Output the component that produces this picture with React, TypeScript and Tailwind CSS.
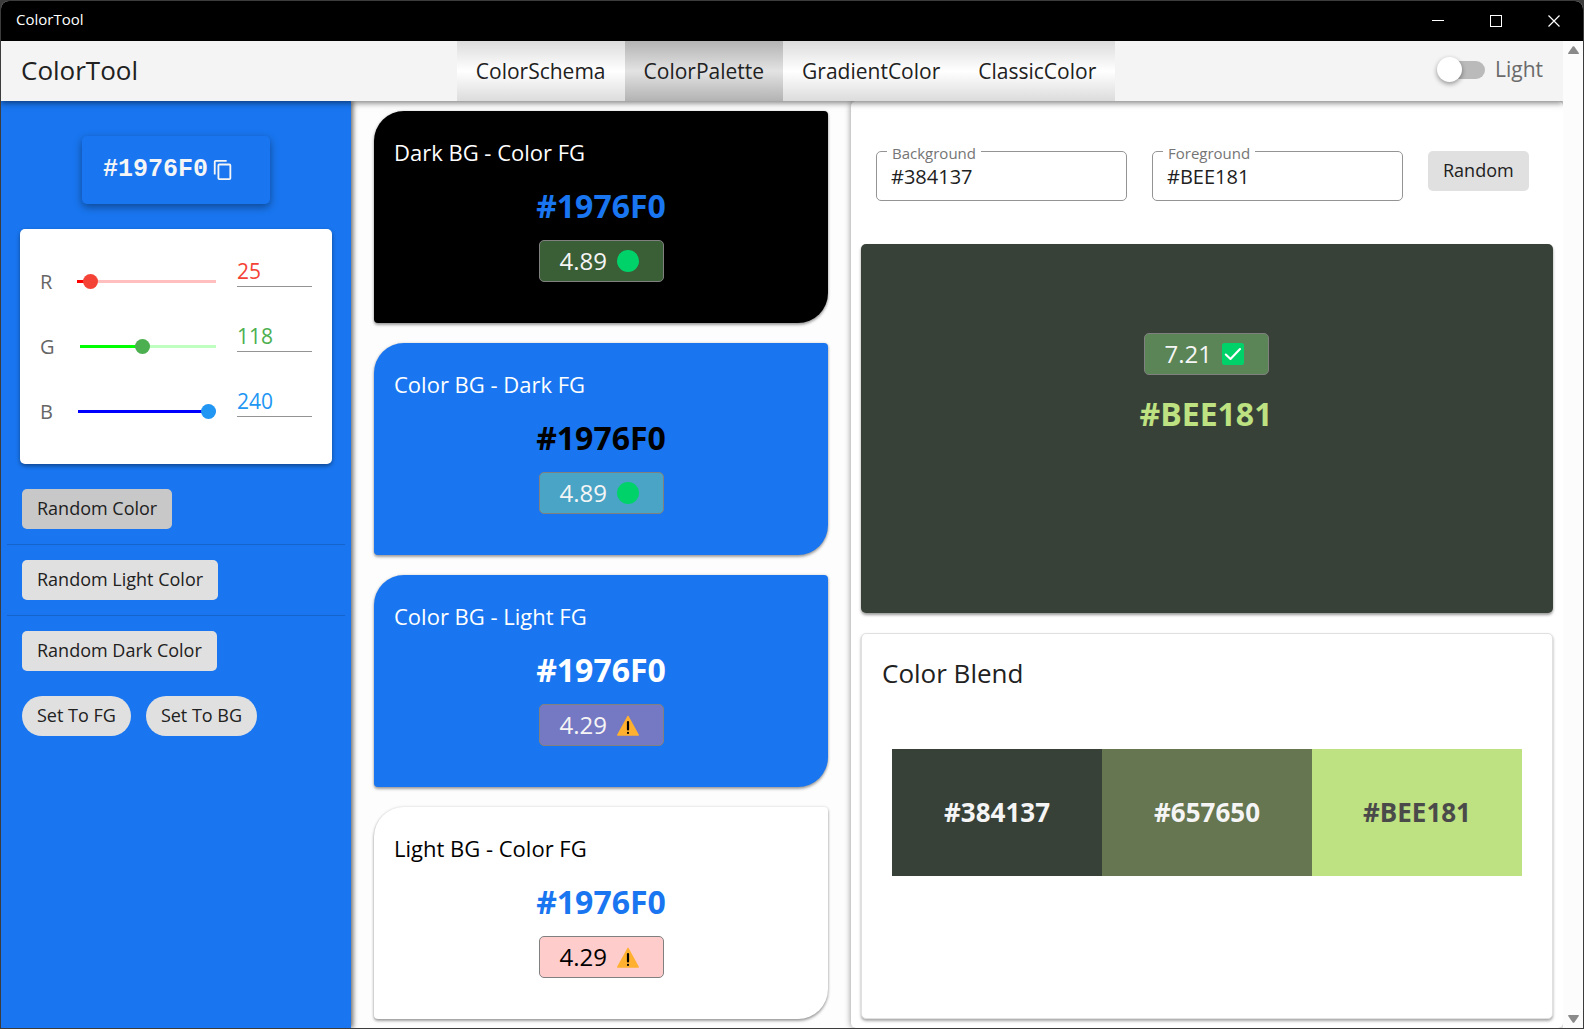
import { useState } from "react";

type Rgb = [number, number, number];

const toHex = (c: Rgb) => "#" + c.map((v) => v.toString(16).padStart(2, "0")).join("").toUpperCase();

const fromHex = (hex: string): Rgb => {
  const n = parseInt(hex.slice(1), 16) || 0;
  return [(n >> 16) & 255, (n >> 8) & 255, n & 255];
};

const luminance = (c: Rgb) => {
  const [r, g, b] = c.map((v) => {
    const s = v / 255;
    return s <= 0.03928 ? s / 12.92 : ((s + 0.055) / 1.055) ** 2.4;
  });
  return 0.2126 * r + 0.7152 * g + 0.0722 * b;
};

const contrast = (a: Rgb, b: Rgb) => {
  const x = luminance(a);
  const y = luminance(b);
  return (Math.max(x, y) + 0.05) / (Math.min(x, y) + 0.05);
};

const randomRgb = (min = 0, max = 255): Rgb => {
  const v = () => min + Math.floor(Math.random() * (max - min + 1));
  return [v(), v(), v()];
};

function RatioIcon({ ratio }: { ratio: number }) {
  if (ratio >= 7) {
    return (
      <svg className="size-[22px]" viewBox="0 0 22 22" aria-hidden="true">
        <rect width="22" height="22" rx="2.5" fill="#00d26a" />
        <path d="M3.800 11.500 8.500 16 18 6" fill="none" stroke="#fff" strokeWidth="2.100" strokeLinecap="round" strokeLinejoin="round" />
      </svg>
    );
  }
  if (ratio >= 4.5) {
    return (
      <svg className="size-[22px]" viewBox="0 0 22 22" aria-hidden="true">
        <circle cx="11" cy="11" r="11" fill="#00d26a" />
      </svg>
    );
  }
  return (
    <svg className="size-[22px]" viewBox="0 0 22 22" aria-hidden="true">
      <path d="M10.300 2.300c.3-.6 1.100-.6 1.400 0L21.900 20.800c.2.400 0 .9-.6.9H.7c-.6 0-.8-.5-.6-.9Z" fill="#ffb02e" />
      <rect x="9.900" y="7" width="2.200" height="9.500" rx="1.100" fill="#000" />
      <circle cx="11" cy="18.900" r="1.100" fill="#000" />
    </svg>
  );
}

function RatioChip({ ratio, dark = false }: { ratio: number; dark?: boolean }) {
  return (
    <div
      className={`flex h-[42px] w-[125px] items-center gap-[10px] rounded-[5px] border border-[#808080] pl-5 text-2xl ${
        dark ? "text-black" : "text-[#f5f5f5]"
      } ${ratio >= 4.5 ? "bg-[rgba(144,235,134,0.4)]" : "bg-[rgba(255,128,128,0.4)]"}`}
    >
      <span>{ratio.toFixed(2)}</span>
      <RatioIcon ratio={ratio} />
    </div>
  );
}

function SchemeCard({ title, bg, fg, hex, dark = false }: { title: string; bg: Rgb; fg: Rgb; hex: string; dark?: boolean }) {
  return (
    <section
      className="flex h-[212px] flex-col rounded-[4px] rounded-tl-[30px] rounded-br-[30px] shadow-[0_2px_3px_rgba(0,0,0,0.35),0_0_3px_rgba(0,0,0,0.15)]"
      style={{ backgroundColor: toHex(bg) }}
    >
      <h2 className={`px-5 pt-[27px] text-[22px] leading-7 ${dark ? "text-black" : "text-white"}`}>{title}</h2>
      <div className="flex flex-col items-center gap-[14px] pt-5">
        <p className="text-[32px] leading-10 font-bold" style={{ color: toHex(fg) }}>
          {hex}
        </p>
        <RatioChip ratio={contrast(bg, fg)} dark={dark} />
      </div>
    </section>
  );
}

type Channel = { name: string; fill: string; rest: string; text: string; thumb: string };

const channels: Channel[] = [
  { name: "R", fill: "#ff0000", rest: "#ffbfbf", text: "text-[#f44336]", thumb: "[&::-webkit-slider-thumb]:bg-[#f44336]" },
  { name: "G", fill: "#00ff00", rest: "#bfffbf", text: "text-[#4caf50]", thumb: "[&::-webkit-slider-thumb]:bg-[#4caf50]" },
  { name: "B", fill: "#0000ff", rest: "#bfbfff", text: "text-[#2196f3]", thumb: "[&::-webkit-slider-thumb]:bg-[#2196f3]" },
];

function ChannelRow({ channel, value, onChange }: { channel: Channel; value: number; onChange: (v: number) => void }) {
  const pct = (value / 255) * 100;
  const id = `channel-${channel.name}`;
  return (
    <div className="flex h-[65px] items-center">
      <label htmlFor={id} className="pr-[25px] text-xl text-[#666]">
        {channel.name}
      </label>
      <div className="relative flex h-4 min-w-0 flex-1 items-center">
        <div
          className="h-[3px] w-full"
          style={{ background: `linear-gradient(to right, ${channel.fill} ${pct}%, ${channel.rest} ${pct}%)` }}
        />
        <input
          id={id}
          type="range"
          min={0}
          max={255}
          value={value}
          onChange={(e) => onChange(Number(e.target.value))}
          className={`absolute inset-y-0 -left-2 w-[calc(100%+16px)] appearance-none bg-transparent [&::-webkit-slider-thumb]:size-[15px] [&::-webkit-slider-thumb]:appearance-none [&::-webkit-slider-thumb]:rounded-full ${channel.thumb}`}
        />
      </div>
      <input
        aria-label={`${channel.name} value`}
        value={value}
        onChange={(e) => onChange(Math.min(255, Math.max(0, Number(e.target.value) || 0)))}
        className={`mb-[22px] ml-[21px] h-8 w-[75px] border-b border-[#949494] bg-transparent pt-0.5 text-[21px] outline-none ${channel.text}`}
      />
    </div>
  );
}

function PlainButton({ children, className = "", onClick }: { children: string; className?: string; onClick?: () => void }) {
  return (
    <button
      type="button"
      onClick={onClick}
      className={`h-10 shrink-0 px-[15px] pb-0.5 text-lg whitespace-nowrap text-[#212121] ${className}`}
    >
      {children}
    </button>
  );
}

function OutlinedField({ label, value, onChange }: { label: string; value: string; onChange: (v: string) => void }) {
  const id = `field-${label}`;
  return (
    <fieldset className="-mt-[14px] h-16 w-[251px] min-w-0 rounded-[5px] border border-[#949494] px-[10px]">
      <legend className="px-[5px] pt-1 text-[15px] leading-6 text-[#757575]">
        <label htmlFor={id}>{label}</label>
      </legend>
      <input
        id={id}
        value={value}
        onChange={(e) => onChange(e.target.value)}
        className="block h-6 w-full bg-transparent px-1 text-xl leading-6 text-[#212121] outline-none"
      />
    </fieldset>
  );
}

const tabs = ["ColorSchema", "ColorPalette", "GradientColor", "ClassicColor"];

export default function App() {
  const [color, setColor] = useState<Rgb>([25, 118, 240]);
  const [background, setBackground] = useState("#384137");
  const [foreground, setForeground] = useState("#BEE181");
  const [tab, setTab] = useState("ColorPalette");
  const hex = toHex(color);
  const black: Rgb = [0, 0, 0];
  const white: Rgb = [255, 255, 255];

  return (
    <div className="h-screen bg-[#3c3c3c] p-px font-['Open_Sans','Noto_Sans',sans-serif]">
      <div className="flex h-full flex-col overflow-hidden rounded-t-lg bg-white">
        <div className="flex h-10 shrink-0 items-center justify-between bg-black pr-[23px] pl-[15px] text-white">
          <span className="pb-1 text-[15px]">ColorTool</span>
          <div className="flex gap-[46px]">
            <button type="button" aria-label="Minimize">
              <svg className="size-3" viewBox="0 0 12 12" fill="none" stroke="#fff">
                <path d="M0 5.500h12" />
              </svg>
            </button>
            <button type="button" aria-label="Maximize">
              <svg className="size-3" viewBox="0 0 12 12" fill="none" stroke="#fff">
                <rect x=".5" y=".5" width="11" height="11" />
              </svg>
            </button>
            <button type="button" aria-label="Close">
              <svg className="size-3" viewBox="0 0 12 12" fill="none" stroke="#fff" strokeWidth="1.200">
                <path d="m.5.5 11 11m0-11-11 11" />
              </svg>
            </button>
          </div>
        </div>

        <div className="flex min-h-0 flex-1">
          <div className="flex min-w-0 flex-1 flex-col">
            <header className="relative z-20 grid h-[60px] shrink-0 grid-cols-[1fr_auto_1fr] items-center bg-[#f4f4f4] pr-5 pl-5 shadow-[0_2px_6px_rgba(0,0,0,0.5)]">
              <h1 className="pb-0.5 text-[26px] text-[#212121]">ColorTool</h1>
              <nav className="ml-2 flex h-full">
                {tabs.map((t) => (
                  <button
                    key={t}
                    type="button"
                    onClick={() => setTab(t)}
                    className={`px-[19px] pt-0.5 text-[21px] text-[#212121] ${
                      t === tab
                        ? "bg-linear-to-b from-[#b3b3b3] via-[#e3e3e3] to-[#b3b3b3]"
                        : "bg-linear-to-b from-[#dcdcdc] via-white to-[#dcdcdc]"
                    }`}
                  >
                    {t}
                  </button>
                ))}
              </nav>
              <label className="flex items-center justify-end gap-[10px] pb-0.5 text-[21px] text-[#6b6b6b]">
                <input
                  type="checkbox"
                  role="switch"
                  className="relative h-[18px] w-9 appearance-none rounded-full bg-[#bababa] before:absolute before:-top-1 before:-left-3 before:size-[25px] before:rounded-full before:bg-white before:shadow-[0_2px_5px_rgba(0,0,0,0.4)] checked:before:left-5"
                />
                Light
              </label>
            </header>

            <div className="flex min-h-0 flex-1">
              <aside
                className="relative z-10 flex w-[350px] shrink-0 flex-col shadow-[2px_0_5px_rgba(0,0,0,0.6)]"
                style={{ backgroundColor: hex }}
              >
                <button
                  type="button"
                  aria-label="Copy color"
                  className="mt-[35px] flex h-[68px] w-[188px] items-center gap-1 self-center rounded-[5px] pl-[21px] font-['Liberation_Mono',monospace] text-[25px] font-bold text-[#f5f5f5] shadow-[0_3px_8px_rgba(0,0,0,0.4)]"
                >
                  {hex}
                  <svg className="size-[22px]" viewBox="0 0 24 24" fill="currentColor" aria-hidden="true">
                    <path d="M19 21H8V7h11m0-2H8a2 2 0 0 0-2 2v14a2 2 0 0 0 2 2h11a2 2 0 0 0 2-2V7a2 2 0 0 0-2-2m-3-4H4a2 2 0 0 0-2 2v14h2V3h12V1Z" />
                  </svg>
                </button>

                <div className="mx-[19px] mt-[25px] h-[235px] rounded-[5px] bg-white px-5 pt-5 shadow-[0_2px_4px_rgba(0,0,0,0.4)]">
                  {channels.map((c, i) => (
                    <ChannelRow
                      key={c.name}
                      channel={c}
                      value={color[i]}
                      onChange={(v) => setColor(color.map((old, j) => (j === i ? v : old)) as Rgb)}
                    />
                  ))}
                </div>

                <div className="mx-[6px] mt-[25px] flex flex-col items-start px-[15px]">
                  <PlainButton className="rounded-[5px] bg-[#c8c8c8]" onClick={() => setColor(randomRgb())}>
                    Random Color
                  </PlainButton>
                </div>
                <hr className="mx-[6px] my-[15px] border-black/15" />
                <div className="mx-[6px] flex flex-col items-start px-[15px]">
                  <PlainButton className="rounded-[5px] bg-[#e0e0e0]" onClick={() => setColor(randomRgb(160, 255))}>
                    Random Light Color
                  </PlainButton>
                </div>
                <hr className="mx-[6px] my-[15px] border-black/15" />
                <div className="mx-[6px] flex flex-col items-start gap-[25px] px-[15px]">
                  <PlainButton className="rounded-[5px] bg-[#e0e0e0]" onClick={() => setColor(randomRgb(0, 95))}>
                    Random Dark Color
                  </PlainButton>
                  <div className="flex gap-[15px]">
                    <PlainButton className="rounded-full bg-[#e0e0e0]" onClick={() => setForeground(hex)}>
                      Set To FG
                    </PlainButton>
                    <PlainButton className="rounded-full bg-[#e0e0e0]" onClick={() => setBackground(hex)}>
                      Set To BG
                    </PlainButton>
                  </div>
                </div>
              </aside>

              <main className="flex w-[500px] shrink-0 flex-col gap-5 overflow-hidden bg-[#fdfdfd] px-[23px] pt-[10px]">
                <SchemeCard title="Dark BG - Color FG" bg={black} fg={color} hex={hex} />
                <SchemeCard title="Color BG - Dark FG" bg={color} fg={black} hex={hex} />
                <SchemeCard title="Color BG - Light FG" bg={color} fg={white} hex={hex} />
                <SchemeCard title="Light BG - Color FG" bg={white} fg={color} hex={hex} dark />
              </main>

              <section className="flex min-w-0 flex-1 flex-col rounded-[5px] bg-white px-[10px] pb-[9px] shadow-[0_0_6px_rgba(0,0,0,0.45)]">
                <div className="flex items-start gap-[25px] px-[15px] pt-[50px]">
                  <OutlinedField label="Background" value={background} onChange={setBackground} />
                  <OutlinedField label="Foreground" value={foreground} onChange={setForeground} />
                  <PlainButton
                    className="rounded-[5px] bg-[#e0e0e0]"
                    onClick={() => {
                      setBackground(toHex(randomRgb(0, 110)));
                      setForeground(toHex(randomRgb(150, 255)));
                    }}
                  >
                    Random
                  </PlainButton>
                </div>

                <div
                  className="mt-[43px] flex h-[369px] shrink-0 flex-col items-center gap-[19px] rounded-[5px] pt-[89px] pr-0.5 shadow-[0_2px_3px_rgba(0,0,0,0.4)]"
                  style={{ backgroundColor: background }}
                >
                  <RatioChip ratio={contrast(fromHex(background), fromHex(foreground))} />
                  <p className="text-[32px] leading-10 font-bold" style={{ color: foreground }}>
                    {foreground}
                  </p>
                </div>

                <div className="mt-5 flex min-h-0 flex-1 flex-col rounded-[5px] border border-[#e0e0e0] bg-white shadow-[0_2px_3px_rgba(0,0,0,0.35)]">
                  <h2 className="px-5 pt-[19px] text-[26px] leading-10 text-[#212121]">Color Blend</h2>
                  <div className="mx-[30px] mt-14 grid h-[127px] grid-cols-3 text-[26px] font-bold">
                    <div className="flex items-center justify-center text-[#f5f5f5]" style={{ backgroundColor: background }}>
                      {background}
                    </div>
                    <div className="flex items-center justify-center bg-[#657650] text-[#f5f5f5]">#657650</div>
                    <div className="flex items-center justify-center text-[#4a4a4a]" style={{ backgroundColor: foreground }}>
                      {foreground}
                    </div>
                  </div>
                </div>
              </section>
            </div>
          </div>

          <div className="relative z-30 flex w-5 shrink-0 flex-col items-center justify-between bg-[#fcfcfc] py-[5px]" aria-hidden="true">
            <svg className="h-2 w-[11px]" viewBox="0 0 11 8" fill="#8a8a8a">
              <path d="M4.700.6q.8-.9 1.600 0L10.800 7q.4 1-.6 1H.8q-1 0-.6-1Z" />
            </svg>
            <svg className="h-2 w-[11px]" viewBox="0 0 11 8" fill="#8a8a8a">
              <path d="M4.700 7.400q.8.9 1.600 0L10.800 1q.4-1-.6-1H.8q-1 0-.6 1Z" />
            </svg>
          </div>
        </div>
      </div>
    </div>
  );
}
